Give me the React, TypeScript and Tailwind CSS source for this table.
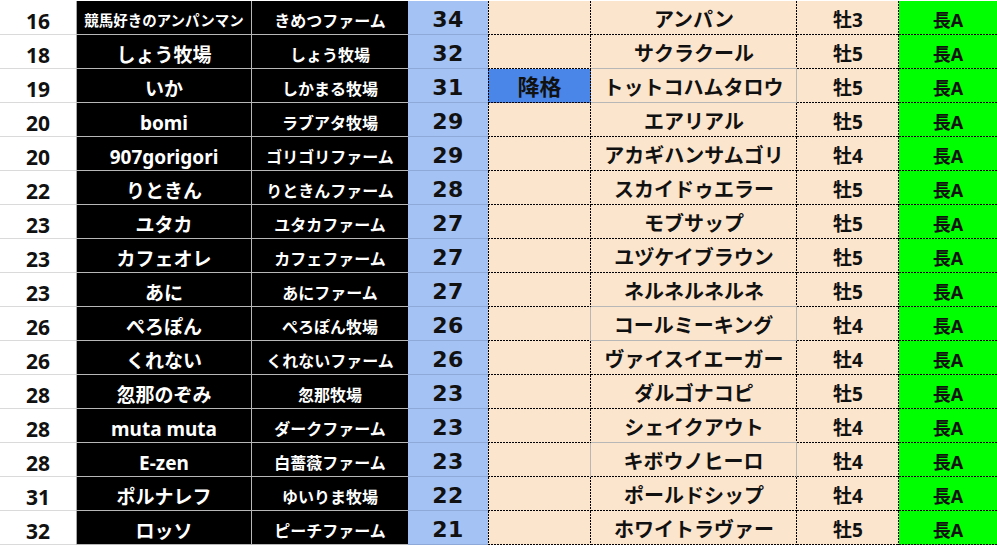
const rows: [number, string, string, number, string, string, string][] = [
  [16, '競馬好きのアンパンマン', 'きめつファーム', 34, '', 'アンパン', '牡3'],
  [18, 'しょう牧場', 'しょう牧場', 32, '', 'サクラクール', '牡5'],
  [19, 'いか', 'しかまる牧場', 31, '降格', 'トットコハムタロウ', '牡5'],
  [20, 'bomi', 'ラブアタ牧場', 29, '', 'エアリアル', '牡5'],
  [20, '907gorigori', 'ゴリゴリファーム', 29, '', 'アカギハンサムゴリ', '牡4'],
  [22, 'りときん', 'りときんファーム', 28, '', 'スカイドゥエラー', '牡5'],
  [23, 'ユタカ', 'ユタカファーム', 27, '', 'モブサップ', '牡5'],
  [23, 'カフェオレ', 'カフェファーム', 27, '', 'ユヅケイブラウン', '牡5'],
  [23, 'あに', 'あにファーム', 27, '', 'ネルネルネルネ', '牡5'],
  [26, 'ぺろぽん', 'ぺろぽん牧場', 26, '', 'コールミーキング', '牡4'],
  [26, 'くれない', 'くれないファーム', 26, '', 'ヴァイスイエーガー', '牡4'],
  [28, '忽那のぞみ', '忽那牧場', 23, '', 'ダルゴナコピ', '牡5'],
  [28, 'muta muta', 'ダークファーム', 23, '', 'シェイクアウト', '牡4'],
  [28, 'E-zen', '白薔薇ファーム', 23, '', 'キボウノヒーロ', '牡4'],
  [31, 'ポルナレフ', 'ゆいりま牧場', 22, '', 'ポールドシップ', '牡4'],
  [32, 'ロッソ', 'ピーチファーム', 21, '', 'ホワイトラヴァー', '牡5'],
]

const jp = "font-['Noto_Sans','Noto_Sans_CJK_JP',sans-serif] font-bold"

// dotted sheet borders (2px on / 1px off), drawn as background lines
const dotBR =
  'bg-no-repeat bg-[image:repeating-linear-gradient(to_right,#000_0_2px,transparent_2px_3px),repeating-linear-gradient(to_bottom,#000_0_2px,transparent_2px_3px)] bg-[length:100%_1px,1px_100%] bg-[position:left_bottom,right_top]'
const dotB =
  'bg-no-repeat bg-[image:repeating-linear-gradient(to_right,#000_0_2px,transparent_2px_3px)] bg-[length:100%_1px] bg-[position:left_bottom]'
const dotR =
  'bg-no-repeat bg-[image:repeating-linear-gradient(to_bottom,#000_0_2px,transparent_2px_3px)] bg-[length:1px_100%] bg-[position:right_top]'
const dotLBR =
  'bg-no-repeat bg-[image:repeating-linear-gradient(to_right,#000_0_2px,transparent_2px_3px),repeating-linear-gradient(to_bottom,#000_0_2px,transparent_2px_3px),repeating-linear-gradient(to_bottom,#000_0_2px,transparent_2px_3px)] bg-[length:100%_1px,1px_100%,1px_100%] bg-[position:left_bottom,right_top,left_top]'
const dotLB =
  'bg-no-repeat bg-[image:repeating-linear-gradient(to_right,#000_0_2px,transparent_2px_3px),repeating-linear-gradient(to_bottom,#000_0_2px,transparent_2px_3px)] bg-[length:100%_1px,1px_100%] bg-[position:left_bottom,left_top]'

// 降格 column: right edge turns grey beside the plain horse-name cells
function demoteBorder(i: number) {
  if (i === 9 || i === 13) return `${dotLB} border-r border-[#b7b7b7]`
  return dotLBR
}

// horse-name column: a few cells keep the grey gridline instead of dots
function nameBorder(i: number) {
  if (i === 2 || i === 9) return 'border-b border-r border-[#b7b7b7]'
  if (i === 13) return `${dotB} border-r border-[#b7b7b7]`
  if (i === 1 || i === 8 || i === 12) return `${dotR} border-b border-[#b7b7b7]`
  return dotBR
}

export default function App() {
  return (
    <div className="w-[997px] h-[545px] overflow-hidden bg-white pt-px">
      <div className="grid grid-cols-[77px_175px_156px_80px_103px_206px_102px_98px] auto-rows-[34px]">
        {rows.map((r, i) => [
          <div
            key={`a${i}`}
            className={`flex items-center justify-center pt-[8px] text-[21px] text-[#111] border-b border-r border-b-[#dadada] border-r-[#a8a8a8] ${jp}`}
          >
            {r[0]}
          </div>,
          <div
            key={`b${i}`}
            className={`flex items-center justify-center bg-black text-white border-b border-r border-[#b7b7b7] whitespace-nowrap ${jp} ${
              i === 0 ? 'pt-[7px] text-[14.5px]' : 'pt-[7px] text-[19px]'
            }`}
          >
            {r[1]}
          </div>,
          <div
            key={`c${i}`}
            className={`flex items-center justify-center pt-[7px] bg-black text-white text-[16px] border-b border-[#b7b7b7] whitespace-nowrap ${jp}`}
          >
            {r[2]}
          </div>,
          <div
            key={`d${i}`}
            className="flex items-center justify-center pt-[4px] bg-[#a4c2f4] text-[#111] text-[22px] tracking-[0.5px] font-bold font-['DejaVu_Sans',sans-serif] border-b border-[#8ea9d8]"
          >
            {r[3]}
          </div>,
          <div
            key={`e${i}`}
            className={`flex items-center justify-center text-[22px] text-[#111] ${demoteBorder(i)} ${jp} ${
              r[4] ? 'bg-[#4a86e8]' : 'bg-[#fce5cd]'
            }`}
          >
            {r[4]}
          </div>,
          <div
            key={`f${i}`}
            className={`flex items-center justify-center pt-[4px] bg-[#fce5cd] text-[#111] text-[20px] whitespace-nowrap ${nameBorder(i)} ${jp}`}
          >
            {r[5]}
          </div>,
          <div
            key={`g${i}`}
            className={`flex items-center justify-center pt-[5px] bg-[#fce5cd] text-[#111] text-[19px] ${dotBR} ${jp}`}
          >
            {r[6]}
          </div>,
          <div
            key={`h${i}`}
            className={`flex items-center justify-center pt-[4px] bg-[#00ff00] text-[#111] text-[18px] ${dotB} ${jp}`}
          >
            長A
          </div>,
        ])}
      </div>
    </div>
  )
}
